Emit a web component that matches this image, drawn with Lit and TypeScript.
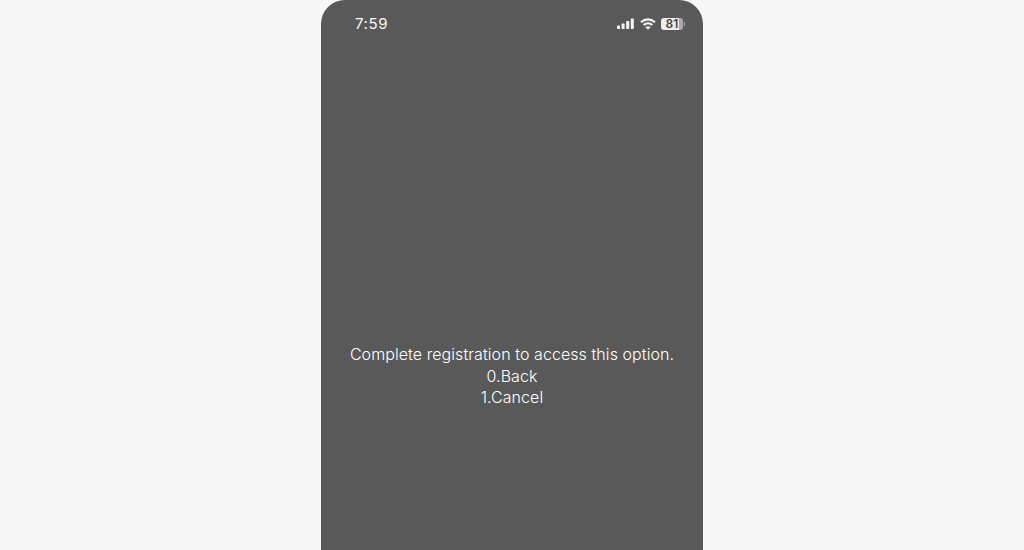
import { LitElement, html, css } from "lit";
import { customElement } from "lit/decorators.js";

@customElement("app-root")
export class AppRoot extends LitElement {
  static styles = css`
    :host {
      display: block;
      width: 1024px;
      height: 550px;
      overflow: hidden;
      background: #f7f7f7;
      font-family: Inter, "Liberation Sans", sans-serif;
    }
    .phone {
      width: 382px;
      height: 550px;
      margin: 0 auto;
      background: #595959;
      border-radius: 24px 24px 0 0;
      display: flex;
      flex-direction: column;
      color: #fff;
    }
    .status {
      height: 47px;
      flex: none;
      display: flex;
      align-items: flex-start;
      justify-content: space-between;
      padding: 14px 18px 0 34px;
      box-sizing: border-box;
    }
    .time {
      font-size: 15px;
      line-height: 20px;
      font-weight: 400;
      letter-spacing: 0.6px;
      color: #f8f8f8;
    }
    .icons {
      display: flex;
      align-items: center;
      gap: 5px;
      height: 19px;
    }
    svg { display: block; }
    .signal { margin-right: 1px; }
    .battery {
      display: flex;
      align-items: center;
      gap: 1px;
    }
    .level {
      width: 22px;
      height: 12px;
      border-radius: 3px;
      background: linear-gradient(90deg, #ececec 0 80%, #a8a8a8 80% 100%);
      color: #454545;
      font-size: 12px;
      line-height: 12px;
      font-weight: 600;
      text-align: center;
    }
    .nub {
      width: 1px;
      height: 4px;
      background: #a5a5a5;
    }
    .message {
      margin-top: 297px;
      font-size: 16px;
      line-height: 21.5px;
      font-weight: 300;
      letter-spacing: 0.07px;
      text-align: center;
      color: #ffffff;
    }
  `;

  render() {
    return html`
      <div class="phone">
        <div class="status">
          <div class="time">7:59</div>
          <div class="icons">
            <svg class="signal" width="17" height="11" viewBox="0 0 17 11" fill="#f4f4f4">
              <rect x="0" y="7.5" width="3" height="3.5" rx="0.7"></rect>
              <rect x="4.6" y="5.5" width="3" height="5.5" rx="0.7"></rect>
              <rect x="9.2" y="3" width="3" height="8" rx="0.7"></rect>
              <rect x="13.8" y="0.5" width="3" height="10.5" rx="0.7"></rect>
            </svg>
            <svg width="16" height="12" viewBox="0 0 16 12" fill="none" stroke="#f4f4f4" stroke-width="2.2">
              <path d="M1 4.2C5 .4 11 .4 15 4.2"></path>
              <path d="M3.6 7C6.2 4.7 9.8 4.7 12.4 7"></path>
              <path d="M8 11.8L5.4 9.2C7 7.9 9 7.9 10.6 9.2Z" fill="#f4f4f4" stroke="none"></path>
            </svg>
            <div class="battery">
              <div class="level">81</div>
              <div class="nub"></div>
            </div>
          </div>
        </div>
        <div class="message">
          <div>Complete registration to access this option.</div>
          <div>0.Back</div>
          <div>1.Cancel</div>
        </div>
      </div>
    `;
  }
}
